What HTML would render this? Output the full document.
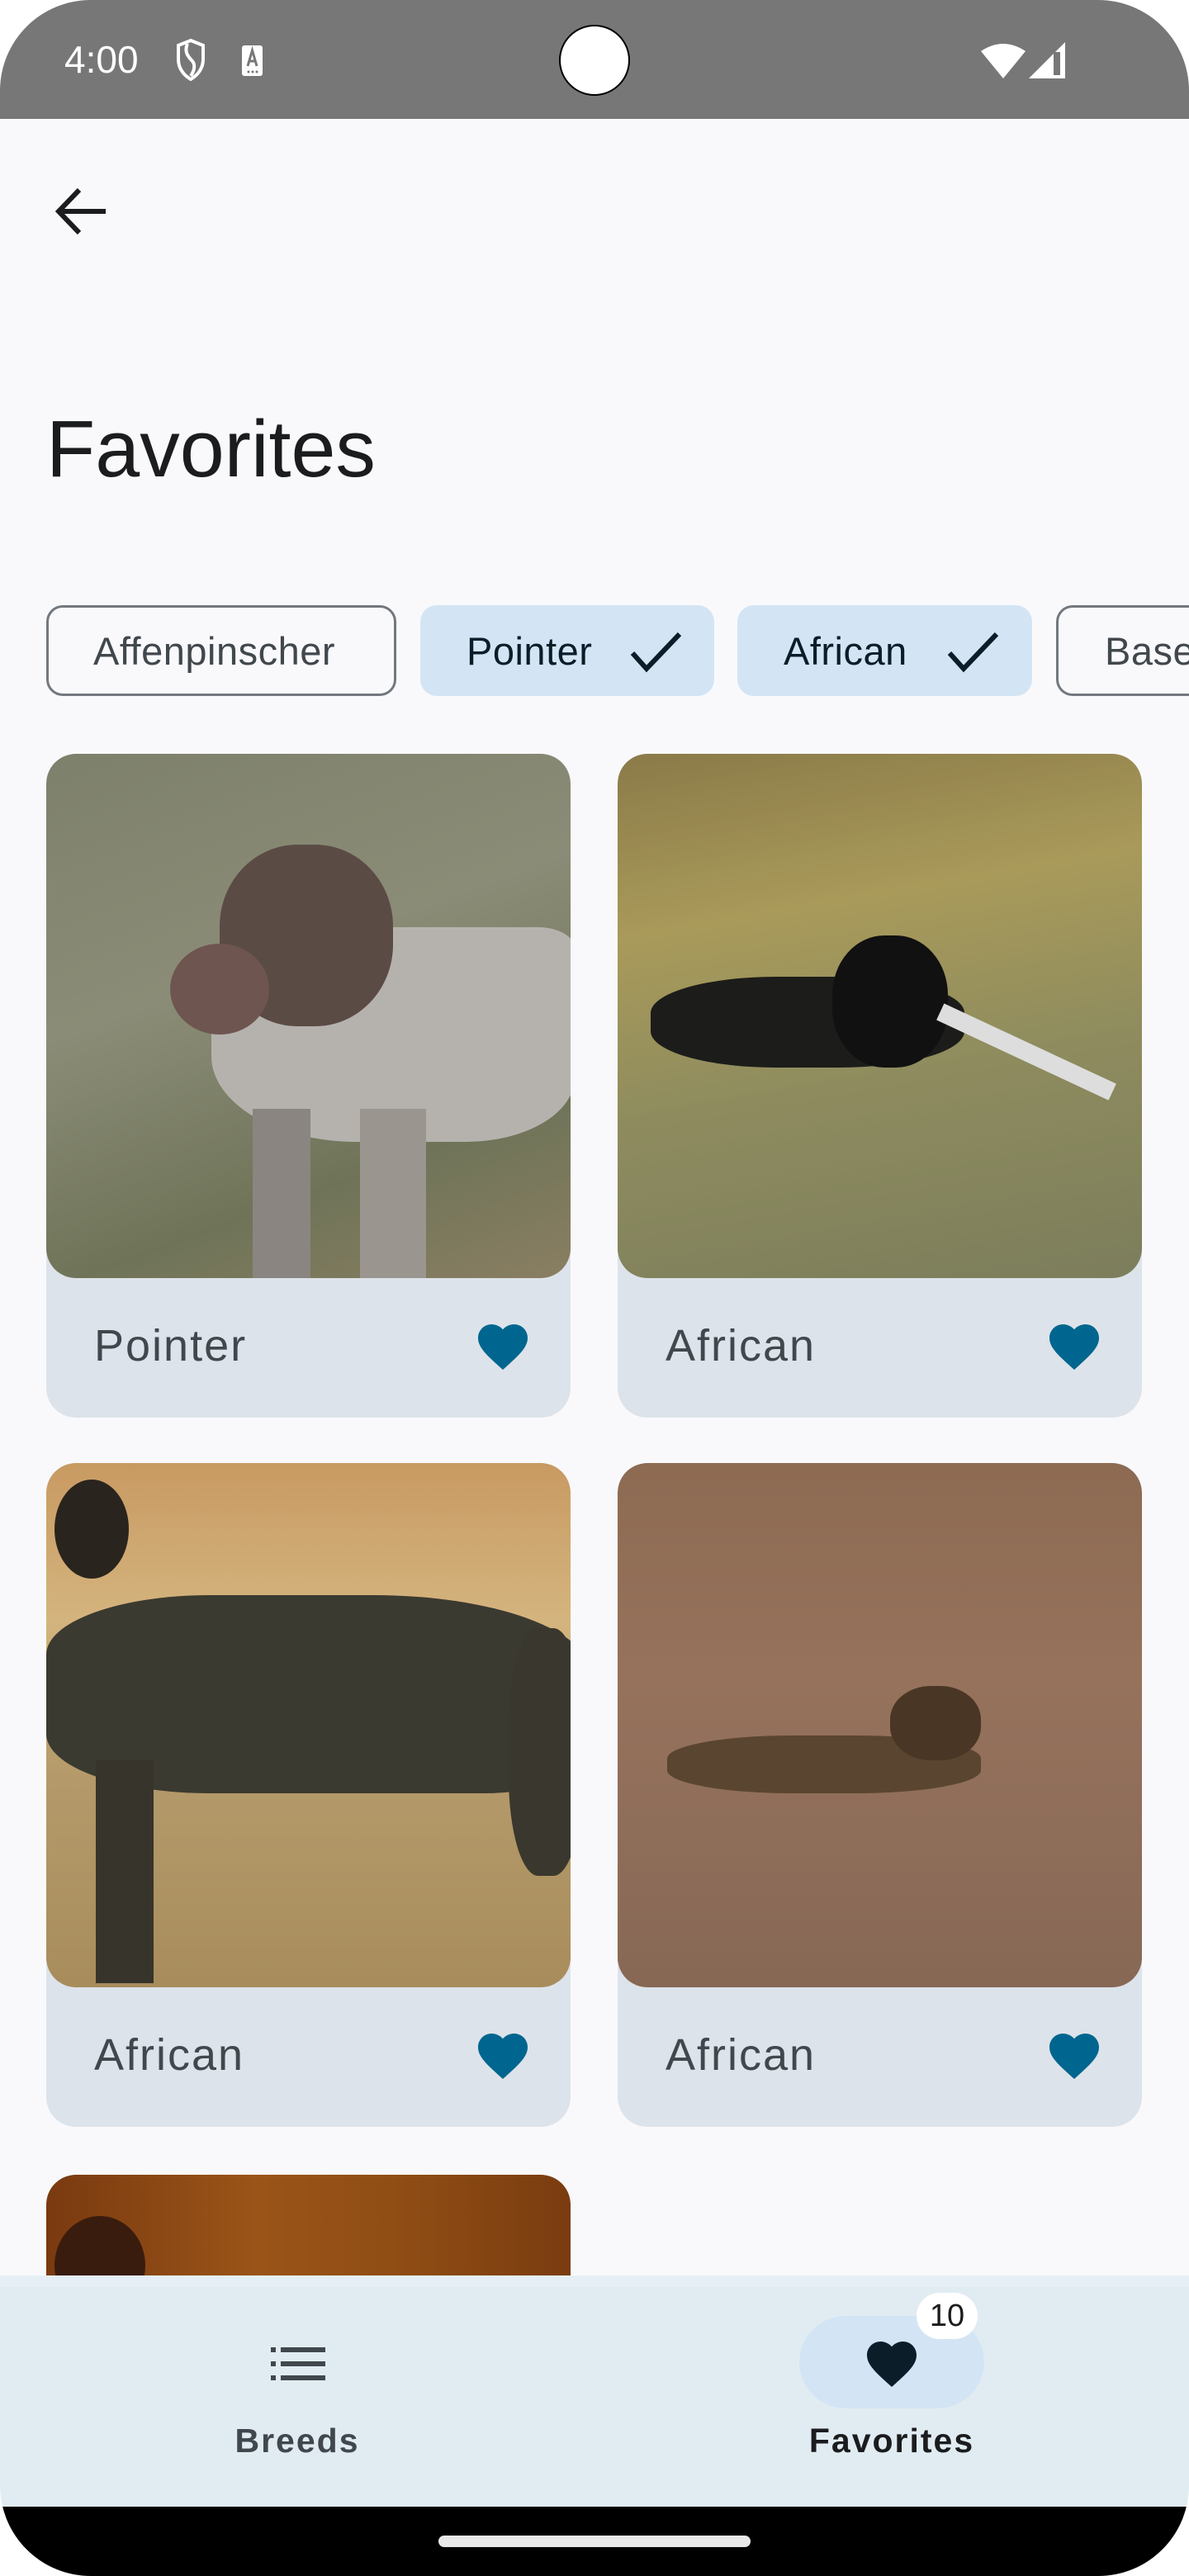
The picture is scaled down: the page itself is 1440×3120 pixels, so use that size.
<!DOCTYPE html>
<html><head><meta charset="utf-8"><style>
*{margin:0;padding:0;box-sizing:border-box}
html,body{width:1440px;height:3120px;background:#fff;overflow:hidden;font-family:"Liberation Sans",Roboto,sans-serif}
#scr{position:absolute;left:0;top:0;width:1440px;height:3120px;background:#f9f9fc;border-radius:110px;overflow:hidden}
.sb{position:absolute;left:0;top:0;width:1440px;height:144px;background:#777}
.abs{position:absolute}
.chip{position:absolute;top:733px;height:110px;border-radius:20px;font-size:47px;color:#41484d;display:flex;align-items:center;padding-left:56px;letter-spacing:0.5px;white-space:nowrap;overflow:hidden}
.chip.o{border:3px solid #72787e}
.chip.s{background:#d3e5f4;color:#0b1d29}
.card{position:absolute;width:635px;height:804px;background:#dde3ea;border-radius:36px;overflow:hidden}
.img{position:absolute;left:0;top:0;width:635px;height:635px;border-radius:36px;overflow:hidden}
.lab{position:absolute;left:58px;top:686px;font-size:54px;color:#41484d;letter-spacing:2px}
.hrt{position:absolute;left:517px;top:682px;width:72px;height:66px}
</style></head><body><div id="scr">
<div class="sb"></div>
<div class="abs" style="left:78px;top:45px;font-size:46px;color:#fff">4:00</div>
<svg class="abs" style="left:213px;top:46px" width="36" height="52" viewBox="0 0 36 52"><path d="M18 3 L33 9 V26 C33 38 25 46 18 50 C11 46 3 38 3 26 V9 Z" fill="none" stroke="#fff" stroke-width="4"/><path d="M14 7 C10 16 14 22 20 28 C24 33 22 40 18 46" fill="none" stroke="#fff" stroke-width="4"/></svg>
<svg class="abs" style="left:293px;top:55px" width="25" height="37" viewBox="0 0 25 37"><rect width="25" height="37" rx="3" fill="#fff"/><path d="M7 25 L12.5 6 L18 25 M9 19 H16" stroke="#777" stroke-width="3" fill="none"/><circle cx="13" cy="32" r="1.5" fill="#777"/><circle cx="18" cy="32" r="1.5" fill="#777"/><circle cx="8" cy="32" r="1.5" fill="#777"/></svg>
<div class="abs" style="left:677px;top:30px;width:86px;height:86px;border-radius:50%;background:#fff;border:2px solid #000"></div>
<svg class="abs" style="left:1188px;top:50px" width="54" height="45" viewBox="0 0 54 45"><path d="M0 12 Q27 -6 54 12 L27 45 Z" fill="#fff"/></svg>
<svg class="abs" style="left:1246px;top:51px" width="45" height="44" viewBox="0 0 45 44"><path d="M44 0 V44 H0 Z" fill="#fff"/><rect x="30" y="12" width="8" height="28" fill="#777"/></svg>
<svg class="abs" style="left:66px;top:226px" width="64" height="60" viewBox="0 0 64 60"><path d="M62 30 H8 M30 4 L5 30 L30 56" fill="none" stroke="#1a1c1e" stroke-width="6"/></svg>
<div class="abs" style="left:56px;top:488px;font-size:97px;color:#1a1c1e">Favorites</div>
<div class="chip o" style="left:56px;width:424px;padding-left:54px">Affenpinscher</div>
<div class="chip s" style="left:509px;width:356px;">Pointer<svg class="abs" style="left:254px;top:32px" width="64" height="50" viewBox="0 0 64 50"><path d="M3 26 L20 45 L60 3" fill="none" stroke="#0b1d29" stroke-width="6"/></svg></div>
<div class="chip s" style="left:893px;width:357px;">African<svg class="abs" style="left:254px;top:32px" width="64" height="50" viewBox="0 0 64 50"><path d="M3 26 L20 45 L60 3" fill="none" stroke="#0b1d29" stroke-width="6"/></svg></div>
<div class="chip o" style="left:1279px;width:161px;border-right:none;border-radius:20px 0 0 20px">Basenji</div>

<div class="card" style="left:56px;top:913px"><div class="img" style="background:linear-gradient(160deg,#7d806b,#8b8c77 40%,#6f7458 75%,#8a7e62)">
<div class="abs" style="left:200px;top:210px;width:440px;height:260px;border-radius:45% 10% 30% 40%;background:#b5b2ae"></div>
<div class="abs" style="left:250px;top:430px;width:70px;height:220px;background:#8a8580"></div>
<div class="abs" style="left:380px;top:430px;width:80px;height:220px;background:#9a958f"></div>
<div class="abs" style="left:210px;top:110px;width:210px;height:220px;border-radius:45%;background:#5b4b45"></div>
<div class="abs" style="left:150px;top:230px;width:120px;height:110px;border-radius:50%;background:#6e5550"></div>
</div><div class="lab">Pointer</div><svg class="hrt" viewBox="0 0 24 22"><path d="M12 21.35l-1.45-1.32C5.4 15.36 2 12.28 2 8.5 2 5.42 4.42 3 7.5 3c1.74 0 3.41.81 4.5 2.09C13.09 3.81 14.76 3 16.5 3 19.58 3 22 5.42 22 8.5c0 3.78-3.4 6.86-8.55 11.54L12 21.35z" fill="#00668f"/></svg></div>

<div class="card" style="left:748px;top:913px"><div class="img" style="background:linear-gradient(170deg,#8a7a48,#a99a5a 30%,#8e8c5e 60%,#7c7d5c)">
<div class="abs" style="left:40px;top:270px;width:380px;height:110px;border-radius:40%;background:#1c1c1a"></div>
<div class="abs" style="left:260px;top:220px;width:140px;height:160px;border-radius:45%;background:#111"></div>
<div class="abs" style="left:380px;top:350px;width:230px;height:22px;transform:rotate(25deg);background:#ddd"></div>
</div><div class="lab">African</div><svg class="hrt" viewBox="0 0 24 22"><path d="M12 21.35l-1.45-1.32C5.4 15.36 2 12.28 2 8.5 2 5.42 4.42 3 7.5 3c1.74 0 3.41.81 4.5 2.09C13.09 3.81 14.76 3 16.5 3 19.58 3 22 5.42 22 8.5c0 3.78-3.4 6.86-8.55 11.54L12 21.35z" fill="#00668f"/></svg></div>

<div class="card" style="left:56px;top:1772px"><div class="img" style="background:linear-gradient(180deg,#c89a62,#d4b47e 30%,#b49a6a 60%,#a88c5c)">
<div class="abs" style="left:0px;top:160px;width:660px;height:240px;border-radius:30% 40% 20% 30%;background:#3b3a30"></div>
<div class="abs" style="left:60px;top:360px;width:70px;height:270px;background:#37342b"></div>
<div class="abs" style="left:560px;top:200px;width:90px;height:300px;border-radius:40%;background:#3a382e"></div>
<div class="abs" style="left:10px;top:20px;width:90px;height:120px;border-radius:50%;background:#2a241e"></div>
</div><div class="lab">African</div><svg class="hrt" viewBox="0 0 24 22"><path d="M12 21.35l-1.45-1.32C5.4 15.36 2 12.28 2 8.5 2 5.42 4.42 3 7.5 3c1.74 0 3.41.81 4.5 2.09C13.09 3.81 14.76 3 16.5 3 19.58 3 22 5.42 22 8.5c0 3.78-3.4 6.86-8.55 11.54L12 21.35z" fill="#00668f"/></svg></div>

<div class="card" style="left:748px;top:1772px"><div class="img" style="background:linear-gradient(180deg,#8d6a52,#96725c 40%,#8c6c58 80%,#876855)">
<div class="abs" style="left:60px;top:330px;width:380px;height:70px;border-radius:40%;background:#5a4530"></div>
<div class="abs" style="left:330px;top:270px;width:110px;height:90px;border-radius:45%;background:#4a3624"></div>
</div><div class="lab">African</div><svg class="hrt" viewBox="0 0 24 22"><path d="M12 21.35l-1.45-1.32C5.4 15.36 2 12.28 2 8.5 2 5.42 4.42 3 7.5 3c1.74 0 3.41.81 4.5 2.09C13.09 3.81 14.76 3 16.5 3 19.58 3 22 5.42 22 8.5c0 3.78-3.4 6.86-8.55 11.54L12 21.35z" fill="#00668f"/></svg></div>

<div class="card" style="left:56px;top:2634px;height:122px;border-radius:36px 36px 0 0"><div class="img" style="height:122px;border-radius:36px 36px 0 0;background:linear-gradient(90deg,#7a3a10,#9a5418 40%,#8e4c14 70%,#7a3c10)">
<div class="abs" style="left:10px;top:50px;width:110px;height:120px;border-radius:50%;background:#3a1c0e"></div>
</div></div>

<div class="abs" style="left:0;top:2756px;width:1440px;height:280px;background:#e1ecf2"></div>
<div class="abs" style="left:0;top:2756px;width:1440px;height:14px;background:#e6eff6"></div>
<svg class="abs" style="left:328px;top:2843px" width="66" height="40" viewBox="0 0 66 40"><g fill="#41484d"><rect x="0" y="0" width="6" height="6"/><rect x="0" y="17" width="6" height="6"/><rect x="0" y="34" width="6" height="6"/><rect x="12" y="0" width="54" height="6"/><rect x="12" y="17" width="54" height="6"/><rect x="12" y="34" width="54" height="6"/></g></svg>
<div class="abs" style="left:260px;top:2933px;width:200px;text-align:center;font-size:41px;font-weight:700;color:#41484d;letter-spacing:2px">Breeds</div>
<div class="abs" style="left:968px;top:2805px;width:224px;height:112px;border-radius:56px;background:#d3e5f4"></div>
<svg class="abs" style="left:1044px;top:2827px" width="72" height="66" viewBox="0 0 24 22"><path d="M12 21.35l-1.45-1.32C5.4 15.36 2 12.28 2 8.5 2 5.42 4.42 3 7.5 3c1.74 0 3.41.81 4.5 2.09C13.09 3.81 14.76 3 16.5 3 19.58 3 22 5.42 22 8.5c0 3.78-3.4 6.86-8.55 11.54L12 21.35z" fill="#0b1d29"/></svg>
<div class="abs" style="left:1110px;top:2777px;width:74px;height:56px;border-radius:28px;background:#fff;text-align:center;font-size:38px;line-height:56px;color:#1a1c1e">10</div>
<div class="abs" style="left:960px;top:2933px;width:240px;text-align:center;font-size:41px;font-weight:700;color:#1a1c1e;letter-spacing:2px">Favorites</div>
<div class="abs" style="left:0;top:3036px;width:1440px;height:84px;background:#000"></div>
<div class="abs" style="left:531px;top:3071px;width:378px;height:14px;border-radius:7px;background:#e8e8e8"></div>
</div></body></html>
